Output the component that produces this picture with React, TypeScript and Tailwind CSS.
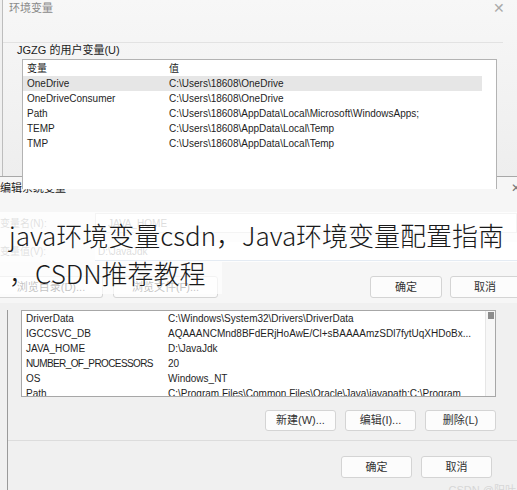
const userVars = [
  ['OneDrive', 'C:\\Users\\18608\\OneDrive'],
  ['OneDriveConsumer', 'C:\\Users\\18608\\OneDrive'],
  ['Path', 'C:\\Users\\18608\\AppData\\Local\\Microsoft\\WindowsApps;'],
  ['TEMP', 'C:\\Users\\18608\\AppData\\Local\\Temp'],
  ['TMP', 'C:\\Users\\18608\\AppData\\Local\\Temp'],
]

const sysVars = [
  ['DriverData', 'C:\\Windows\\System32\\Drivers\\DriverData'],
  ['IGCCSVC_DB', 'AQAAANCMnd8BFdERjHoAwE/Cl+sBAAAAmzSDl7fytUqXHDoBx...'],
  ['JAVA_HOME', 'D:\\JavaJdk'],
  ['NUMBER_OF_PROCESSORS', '20'],
  ['OS', 'Windows_NT'],
  ['Path', 'C:\\Program Files\\Common Files\\Oracle\\Java\\javapath;C:\\Program'],
]

function Row({ name, value, selected }: { name: string; value: string; selected?: boolean }) {
  // all-caps names run wide in Liberation Sans, tighten them a little
  const caps = name === name.toUpperCase() && name.length > 12
  return (
    <div className={`flex h-[15px] items-center ${selected ? 'bg-[#e6e6e6] mr-[14px]' : ''}`}>
      <span className={`w-[146px] shrink-0 pl-[4px] whitespace-nowrap ${caps ? 'tracking-[-0.6px]' : ''}`}>{name}</span>
      <span className="whitespace-nowrap">{value}</span>
    </div>
  )
}

function Btn({ children, className = '' }: { children: React.ReactNode; className?: string }) {
  return (
    <div
      className={`flex items-center justify-center rounded-[3px] border border-[#d4d4d4] bg-[#fcfcfc] text-[11px] text-[#333] ${className}`}
    >
      {children}
    </div>
  )
}

export default function App() {
  return (
    <div className="relative h-[490px] w-[517px] overflow-hidden bg-[#f0f0f0] font-['Liberation_Sans','Noto_Sans_CJK_SC',sans-serif] text-[10px] text-[#1e1e1e]">
      {/* 环境变量 dialog, top part */}
      <div className="relative h-[176px] border-l border-[#bdbdbd] ml-[2px] bg-gradient-to-b from-[#f7f7f7] to-[#eeeeee]">
        <div className="flex h-[16px] items-center justify-between pl-[6px] pr-[12px]">
          <span className="text-[11px] text-[#8a8a8a]">环境变量</span>
          <span className="text-[14px] leading-none text-[#aaa]">✕</span>
        </div>
        <div className="mt-[26px] mr-[14px] h-px bg-[#e2e2e2]" />
        <div className="pl-[14px] h-[15px] flex items-center text-[11px] text-[#222]">JGZG 的用户变量(U)</div>
        <div className="ml-[19px] mt-[1px] h-[130px] w-[475px] border border-b-0 border-[#b3b3b3] bg-white pt-[1px]">
          <Row name="变量" value="值" />
          {userVars.map(([n, v], i) => (
            <Row key={n} name={n} value={v} selected={i === 0} />
          ))}
        </div>
      </div>

      {/* 编辑系统变量 dialog */}
      <div className="h-[127px] border-t border-[#a8a8a8] bg-[#f6f6f6]">
        <div className="flex h-[22px] items-center justify-between">
          <span className="text-[11px] text-[#222]">编辑系统变量</span>
          <span className="mr-[-4px] text-[12px] text-[#777]">✕</span>
        </div>
        <div className="mt-[14px] flex h-[20px] items-center">
          <span className="w-[95px] text-[#666]">变量名(N):</span>
          <div className="flex h-full flex-1 items-center border border-[#c8c8c8] bg-white pl-[12px] text-[#555]">JAVA_HOME</div>
        </div>
        <div className="mt-[9px] flex h-[19px] items-center">
          <span className="w-[95px] text-[#666]">变量值(V):</span>
          <div className="flex h-full flex-1 items-center border-b border-[#7a9cc4] bg-white pl-[3px] text-[#555]">D:\JavaJdk</div>
        </div>
        <div className="mt-[15px] flex h-[22px] items-stretch">
          <Btn className="w-[103px] border-l-0 rounded-l-none">浏览目录(D)...</Btn>
          <Btn className="ml-[10px] w-[105px]">浏览文件(F)...</Btn>
          <Btn className="ml-auto w-[72px] border-[#8fb3d9]">确定</Btn>
          <Btn className="ml-[8px] w-[70px] mr-[-3px]">取消</Btn>
        </div>
      </div>

      {/* 环境变量 dialog, lower part */}
      <div className="relative h-[187px] border-l border-[#9a9a9a] ml-[7px] bg-[#f0f0f0]">
        <div className="relative ml-[13px] mt-[7px] h-[87px] w-[475px] overflow-hidden border border-[#a7a7a7] bg-white">
          {sysVars.map(([n, v]) => (
            <Row key={n} name={n} value={v} />
          ))}
          <div className="absolute right-0 top-0 h-full w-[10px] border-l border-[#e6e6e6] bg-[#f7f7f7]">
            <div className="ml-[2px] mt-[1px] h-[7px] w-[6px] bg-[#8c8c8c]" />
          </div>
        </div>
        <div className="mt-[13px] flex justify-end gap-[9px] pr-[21px]">
          <Btn className="h-[21px] w-[71px]">新建(W)...</Btn>
          <Btn className="h-[21px] w-[71px]">编辑(I)...</Btn>
          <Btn className="h-[21px] w-[71px]">删除(L)</Btn>
        </div>
        <div className="mt-[9px] h-px bg-[#dcdcdc]" />
        <div className="mt-[15px] flex justify-end gap-[9px] pr-[25px]">
          <Btn className="h-[22px] w-[71px]">确定</Btn>
          <Btn className="h-[22px] w-[71px]">取消</Btn>
        </div>
        <div className="absolute bottom-0 right-[1px] text-[11px] leading-[13px] text-[#d6d6d6]">CSDN @阳叶</div>
      </div>

      {/* caption over the screenshot */}
      <div className="absolute left-0 right-0 top-[212px] font-['Noto_Sans_CJK_SC',sans-serif] text-[26px] font-light text-[#1a1a1a]">
        <div className="h-[50px] bg-white/80 pl-[9px] pt-[4px] leading-[38px] whitespace-nowrap">java环境变量csdn，Java环境变量配置指南</div>
        <div className="h-[32px] w-[222px] bg-white/70 pl-[9px] leading-[22px]">，CSDN推荐教程</div>
      </div>
    </div>
  )
}
